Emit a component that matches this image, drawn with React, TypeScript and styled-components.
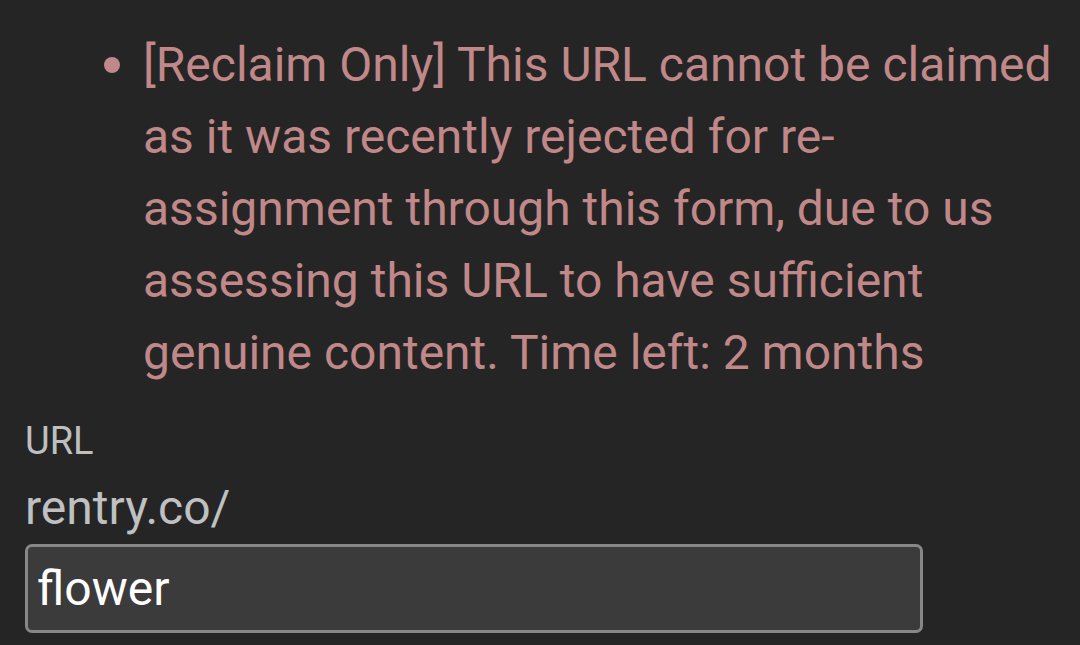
import React from 'react'
import styled, { createGlobalStyle } from 'styled-components'

const GlobalStyle = createGlobalStyle`
  html, body {
    margin: 0;
    padding: 0;
    background: #252525;
  }
  body {
    font-family: Roboto, "Noto Sans", sans-serif;
  }
`

const Page = styled.div`
  padding: 28px 10px 0 25px;
  height: 645px;
  box-sizing: border-box;
  overflow: hidden;
`

const Errors = styled.ul`
  margin: 0;
  padding-left: 118px;
  color: #c08888;
  font-size: 48px;
  line-height: 72px;

  li::marker {
    font-size: 52px;
  }
`

const Label = styled.div`
  margin-top: 26px;
  color: #bfbfc2;
  font-size: 38px;
  line-height: 52px;
`

const Prefix = styled.div`
  margin-top: 5px;
  color: #bfc0c2;
  font-size: 48px;
  line-height: 72px;
`

const Input = styled.input`
  display: block;
  box-sizing: border-box;
  width: 898px;
  height: 89px;
  margin: 0;
  padding: 0 9px;
  background: #3b3b3b;
  border: 3px solid #878787;
  border-radius: 7px;
  color: #ffffff;
  font-family: Roboto, "Noto Sans", sans-serif;
  font-size: 48px;
  outline: none;
`

export default function App() {
  return (
    <Page>
      <GlobalStyle />
      <Errors>
        <li>
          [Reclaim Only] This URL cannot be claimed as it was recently rejected for re-assignment
          through this form, due to us assessing this URL to have sufficient genuine content. Time
          left: 2 months
        </li>
      </Errors>
      <Label>URL</Label>
      <Prefix>rentry.co/</Prefix>
      <Input defaultValue="flower" />
    </Page>
  )
}
